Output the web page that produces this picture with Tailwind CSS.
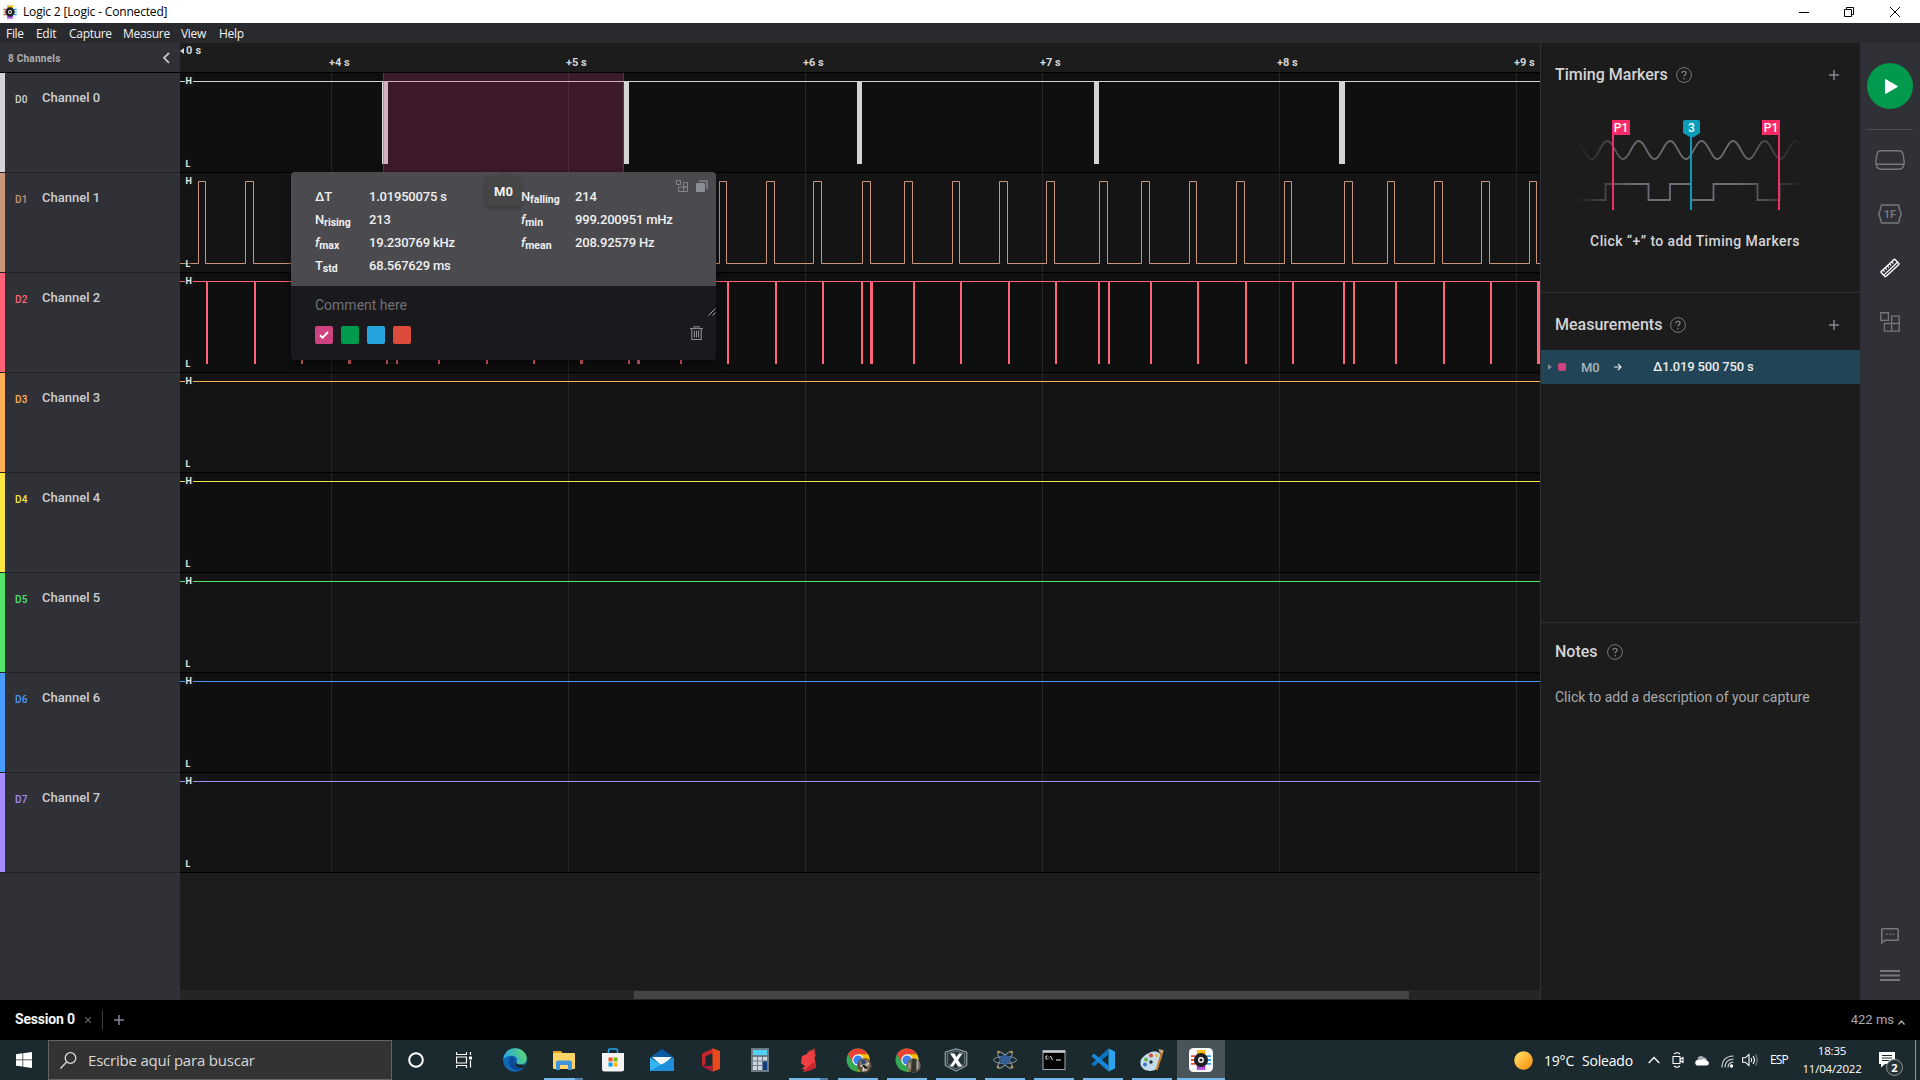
<!DOCTYPE html>
<html lang="en">
<head>
<meta charset="utf-8">
<title>Logic 2 [Logic - Connected]</title>
<script src="https://cdn.jsdelivr.net/npm/@tailwindcss/browser@4"></script>
</head>
<body class="w-[1920px] h-[1080px] overflow-hidden flex flex-col bg-black font-['Roboto',sans-serif] text-[#d4d4d6]">

<svg class="hidden">
  <defs>
    <symbol id="help" viewBox="0 0 16 16"><circle cx="8" cy="8" r="7.4" fill="none" stroke="#77787c" stroke-width="1"/><path d="M5.9 6.3c0-2.7 4.2-2.7 4.2-.2 0 1.7-2.1 1.5-2.1 3.4" fill="none" stroke="#85868a" stroke-width="1.2"/><circle cx="8" cy="11.7" r=".8" fill="#85868a"/></symbol>
    <symbol id="plus" viewBox="0 0 10 10"><path d="M5 0v10M0 5h10" stroke="#85868f" stroke-width="1.5"/></symbol>
    <symbol id="blocks" viewBox="0 0 20 20"><path d="M.75.75h7.7v7.7H.75zM11.6 4.2h7.6v7.3h-7.6zM4.4 11.5h7.2v7.7H4.4zM11.6 11.5h7.6v7.7h-7.6z" fill="none" stroke="currentColor" stroke-width="1.3"/></symbol>
    <symbol id="chrome" viewBox="0 0 24 24"><circle cx="12" cy="12" r="11.5" fill="#34a853"/><path d="M2 6.3A11.5 11.5 0 0 1 22 6.3H12L7 14.5z" fill="#ea4335"/><path d="M22 6.3A11.5 11.5 0 0 1 11.5 23.5L17 15 12 6.3z" fill="#fbbc04"/><circle cx="12" cy="12" r="5.7" fill="#fff"/><circle cx="12" cy="12" r="4.6" fill="#3b82ec"/></symbol>
    <symbol id="logic" viewBox="0 0 24 24"><rect width="24" height="24" rx="4.5" fill="#fafafa"/><path d="M8.8 2v3h2.200V2m2.200 0v3h2.200V2" stroke="#f5b400" stroke-width="1.800" fill="none"/><path d="M2 8.200h4M2 12h3M2 15.800h4" stroke="#ef4b3f" stroke-width="1.800"/><path d="M18 8.200h4M19 12h3M18 15.800h4" stroke="#29a5e8" stroke-width="1.800"/><path d="M8.800 22v-3h2.200v3m2.200 0v-3h2.200v3" stroke="#a13bd8" stroke-width="1.800" fill="none"/><circle cx="12" cy="12" r="5" fill="#fff" stroke="#202124" stroke-width="4.200"/><circle cx="12" cy="12" r="1.600" fill="#202124"/></symbol>
  </defs>
</svg>

<!-- window title -->
<header class="h-[23px] shrink-0 bg-white text-black flex items-center pl-[2px] font-['Open_Sans',sans-serif]">
  <svg class="size-[16px]"><use href="#logic"/></svg>
  <span class="ml-[5px] text-[12px] tracking-[-0.17px] leading-[23px]">Logic 2 [Logic - Connected]</span>
  <div class="ml-auto flex items-center">
    <svg class="w-[10px] h-[10px] mr-[35px]" viewBox="0 0 10 10"><path d="M0 5.5h10" stroke="#000"/></svg>
    <svg class="w-[10px] h-[10px] mr-[36px]" viewBox="0 0 10 10"><path d="M.5 2.5h7v7h-7zM2.5 2.5v-2h7v7h-2" fill="none" stroke="#000"/></svg>
    <svg class="w-[10px] h-[10px] mr-[20px]" viewBox="0 0 10 10"><path d="M0 0l10 10M10 0L0 10" stroke="#000"/></svg>
  </div>
</header>

<nav class="h-[20px] shrink-0 bg-[#292a2d] text-[#f2f2f2] text-[12px] leading-[21px] font-['Open_Sans',sans-serif] tracking-[-0.3px] flex pl-[6px] gap-[12px]">
  <span class="w-[18px] whitespace-nowrap">File</span><span class="w-[21px]">Edit</span><span class="w-[42px]">Capture</span><span class="w-[46px]">Measure</span><span class="w-[26px]">View</span><span>Help</span>
</nav>

<main class="h-[957px] shrink-0 flex">
  <!-- channel list -->
  <aside class="w-[180px] bg-[#303136] flex flex-col">
    <div class="h-[30px] border-b border-black flex items-center justify-between pl-[8px] pr-[10px]">
      <span class="pt-px text-[10px] font-bold text-[#aeafb3] tracking-[0.25px]">8 Channels</span>
      <svg class="w-[8px] h-[12px]" viewBox="0 0 8 12"><path d="M7 1L2 5.8 7 10.8" fill="none" stroke="#c4c5c8" stroke-width="1.8"/></svg>
    </div>
    <div id="channels"></div>
  </aside>

  <!-- waveform area -->
  <section class="relative w-[1360px] bg-[#1c1c1c] flex flex-col">
    <div class="relative h-[30px] border-b border-black text-[11px] font-bold text-[#d6d6d6]">
      <div class="absolute left-0 top-[1px] flex items-center leading-[14px] tracking-[0.2px]"><svg class="w-[4px] h-[6px] mr-[2px]" viewBox="0 0 4 6"><path d="M4 0v6L0 3z" fill="#d6d6d6"/></svg>0 s</div>
      <div id="ticks"></div>
    </div>
    <div id="waves"></div>
    <div class="absolute left-[203px] top-[30px] w-[241px] h-[99px] bg-[#d03d7d]/24 border-x border-[#d03d7d]/40"></div>
    <div class="mt-auto h-[10px] bg-[#252525] flex items-center"><div class="ml-[454px] w-[775px] h-[8px] bg-[#444444]"></div></div>

    <!-- measurement popup -->
    <div class="absolute left-[111px] top-[129px] w-[425px] h-[188px] rounded-[4px] bg-[#1a191e] shadow-[0_4px_10px_rgba(0,0,0,0.5)]">
      <div class="h-[114px] rounded-t-[4px] bg-[#4a4a4f] pl-[24px] pt-[13px] grid grid-cols-[54px_152px_54px_1fr] auto-rows-[23px] items-start content-start text-[13px] leading-[23px] tracking-[-0.2px] font-medium text-[#f0f0f1] [&_sub]:text-[10.5px] [&_sub]:bottom-[-0.2em] [&_sub]:font-bold [&_sub]:tracking-normal">
        <span>ΔT</span><span>1.01950075 s</span><span>N<sub>falling</sub></span><span>214</span>
        <span>N<sub>rising</sub></span><span>213</span><span><i>f</i><sub>min</sub></span><span>999.200951 mHz</span>
        <span><i>f</i><sub>max</sub></span><span>19.230769 kHz</span><span><i>f</i><sub>mean</sub></span><span>208.92579 Hz</span>
        <span>T<sub>std</sub></span><span>68.567629 ms</span>
      </div>
      <div class="pl-[24px] pt-[10px]">
        <div class="text-[14px] leading-[18px] text-[#707073]">Comment here</div>
        <div class="mt-[12px] flex items-center gap-[8px]">
          <div class="size-[18px] rounded-[2px] bg-[#d0417f] flex items-center justify-center"><svg class="size-[10px]" viewBox="0 0 10 10"><path d="M1 5.2l2.6 2.5L9 2" fill="none" stroke="#fff" stroke-width="1.9"/></svg></div>
          <div class="size-[18px] rounded-[2px] bg-[#009a4c]"></div>
          <div class="size-[18px] rounded-[2px] bg-[#25a3dc]"></div>
          <div class="size-[18px] rounded-[2px] bg-[#dc4c3a]"></div>
          <svg class="ml-auto mr-[13px] -mt-[4px] w-[13px] h-[14px]" viewBox="0 0 13 14"><path d="M0 2.5h13M4 2.2V.7h5v1.5M1.8 2.5v11h9.4v-11M4.4 4.5v7M6.5 4.5v7M8.6 4.5v7" fill="none" stroke="#8b8b93" stroke-width="1.1"/></svg>
        </div>
      </div>
      <svg class="absolute right-0 top-[136px] size-[8px]" viewBox="0 0 8 8"><path d="M.5 7.5l7-7M4.5 7.5l3-3" stroke="#c0c0c0" stroke-width=".9"/></svg>
      <div class="absolute right-[8px] top-[8px] flex gap-[8px] text-[#85858c]">
        <svg class="size-[12px]" viewBox="0 0 12 12"><path d="M.5.5h4v4h-4zM7.500 2.500h4v4.500h-4zM2.500 7h5v4.500h-5zM7.500 7h4v4.500h-4z" fill="none" stroke="currentColor"/></svg>
        <svg class="size-[12px]" viewBox="0 0 12 12"><rect y="3" width="9" height="9" rx="1" fill="#8d8d98"/><path d="M3 1h8v8" fill="none" stroke="#85858e" stroke-width="1.6"/></svg>
      </div>
      <div class="absolute left-[195px] top-[5px] w-[35px] h-[29px] rounded-[3px] bg-[#464646] shadow-[0_2px_4px_rgba(0,0,0,0.25)] text-center text-[13px] leading-[30px] font-bold text-[#f2f2f2]">M0</div>
      <svg class="absolute left-[206px] top-0 w-[12px] h-[5px]" viewBox="0 0 12 5"><path d="M6 0l6 5H0z" fill="#464646"/></svg>
    </div>
  </section>

  <!-- side panel -->
  <aside class="w-[320px] bg-[#1c1c1c] border-l border-[#303136] flex flex-col">
    <section class="h-[250px] border-b border-[#303136]">
      <div class="pt-[20px] pl-[14px] pr-[21px] flex items-center">
        <h2 class="text-[16px] leading-[23px] font-medium">Timing Markers</h2>
        <svg class="size-[16px] ml-[8px]"><use href="#help"/></svg>
        <svg class="size-[10px] ml-auto"><use href="#plus"/></svg>
      </div>
      <svg class="ml-[19px] mt-[29px] w-[250px] h-[100px] font-['Roboto',sans-serif]" viewBox="1560 115 250 100">
        <defs><linearGradient id="fade" gradientUnits="userSpaceOnUse" x1="1576" x2="1804" y1="0" y2="0"><stop offset="0" stop-color="#6d6c75" stop-opacity="0"/><stop offset=".25" stop-color="#6d6c75"/><stop offset=".72" stop-color="#6d6c75"/><stop offset="1" stop-color="#6d6c75" stop-opacity="0"/></linearGradient></defs>
        <path id="sine" fill="none" stroke="url(#fade)" stroke-width="1.8"/>
        <path d="M1574 200H1605.5V184H1648.5V200H1670V184H1691V200H1713.5V184H1757.5V200H1780V184H1803" fill="none" stroke="url(#fade)" stroke-width="1.8"/>
        <path d="M1612 120h18v15h-16v75h-2zM1762 120h18v90h-2v-75h-16z" fill="#f92b66"/>
        <path d="M1685 120h13a2 2 0 0 1 2 2v11l-6 4h-2v73h-2v-73l-7-4v-11a2 2 0 0 1 2-2z" fill="#0b9cb8"/>
        <g fill="#fff" font-size="12" font-weight="500" text-anchor="middle"><text x="1621" y="132">P1</text><text x="1771" y="132">P1</text><text x="1691.5" y="132">3</text></g>
      </svg>
      <p class="mt-[16px] text-[14px] tracking-[0.4px] leading-[20px] font-medium text-center pr-[11px]">Click “+” to add Timing Markers</p>
    </section>
    <section class="h-[330px] border-b border-[#303136]">
      <div class="pt-[20px] pl-[14px] pr-[21px] flex items-center">
        <h2 class="text-[16px] leading-[23px] font-medium">Measurements</h2>
        <svg class="size-[16px] ml-[8px]"><use href="#help"/></svg>
        <svg class="size-[10px] ml-auto"><use href="#plus"/></svg>
      </div>
      <div class="mt-[14px] h-[34px] bg-[#214457] flex items-center pl-[7px]">
        <svg class="w-[4px] h-[6px]" viewBox="0 0 4 6"><path d="M0 0l4 3-4 3z" fill="#7d8c95"/></svg>
        <div class="ml-[6px] size-[8px] rounded-[2px] bg-[#d0417f]"></div>
        <span class="ml-[15px] mt-px w-[33px] text-[13px] font-medium text-[#a9b4bc]">M0</span>
        <svg class="w-[8px] h-[8px]" viewBox="0 0 8 8"><path d="M0 4h7M4 1l3 3-3 3" fill="none" stroke="#e8e8e8" stroke-width="1.2"/></svg>
        <span class="ml-[31px] text-[13px] tracking-[-0.17px] font-medium text-[#ececee]">Δ1.019 500 750 s</span>
      </div>
    </section>
    <section>
      <div class="pt-[17px] pl-[14px] flex items-center">
        <h2 class="text-[16px] leading-[23px] font-medium">Notes</h2>
        <svg class="size-[16px] ml-[9px]"><use href="#help"/></svg>
      </div>
      <p class="mt-[24px] pl-[14px] text-[14px] leading-[20px] text-[#a9aaad]">Click to add a description of your capture</p>
    </section>
  </aside>

  <!-- tool strip -->
  <aside class="w-[60px] bg-[#303136] flex flex-col items-center pt-[20px] text-[#77787d]">
    <div class="size-[46px] rounded-full bg-[#00994d] flex items-center justify-center"><svg class="ml-[3px] w-[13px] h-[15px]" viewBox="0 0 13 15"><path d="M.5.5v14L12.5 7.5z" fill="#fff" stroke="#fff" stroke-linejoin="round"/></svg></div>
    <div class="mt-[20px] w-[46px] h-px bg-[#4e4f54]"></div>
    <svg class="mt-[20px] w-[30px] h-[20px]" viewBox="0 0 30 20"><path d="M6 .8h18q3.500 0 4.200 4.200l1 7q0 7-5.200 7.200H6Q.8 19 .8 12l1-7Q2.500.8 6 .8zM1 14.200h28" fill="none" stroke="currentColor" stroke-width="1.4"/></svg>
    <svg class="mt-[34px] w-[24px] h-[20px] font-['Roboto',sans-serif]" viewBox="0 0 24 20"><path d="M4.200 1h15.600q.8 0 1 .8Q21.500 6 23.200 10 21.500 14 20.800 18.200q-.2.8-1 .8H4.200q-.8 0-1-.8Q2.500 14 .8 10 2.500 6 3.200 1.800q.2-.8 1-.8z" fill="none" stroke="currentColor" stroke-width="1.5"/><text x="12" y="14" text-anchor="middle" font-size="11" font-weight="700" fill="currentColor">1F</text></svg>
    <svg class="mt-[34px] w-[22px] h-[20px]" viewBox="0 0 22 20"><g transform="rotate(-43 11 10)" fill="none" stroke="#fff"><rect x="1.500" y="6.500" width="19" height="7" rx="1" stroke-width="1.400"/><path d="M2 11h18" stroke-width="1.300"/><path d="M4.500 6.500v2.500M7.500 6.500v2.500M10.500 6.500v2.500M13.500 6.500v2.500M16.500 6.500v2.500" stroke-width="1.200"/></g></svg>
    <svg class="mt-[34px] size-[20px]"><use href="#blocks"/></svg>
    <svg class="mt-auto w-[18px] h-[16px]" viewBox="0 0 18 16"><path d="M.8 15V1.600q0-.8.8-.8h14.800q.8 0 .8.8v9.800q0 .8-.8.8H4z" fill="none" stroke="currentColor" stroke-width="1.500"/><path d="M5 6.300h1.500M8.300 6.300h1.500M11.600 6.300h1.500" stroke="currentColor" stroke-width="1.500"/></svg>
    <svg class="mt-[25px] mb-[18px] w-[20px] h-[13px]" viewBox="0 0 20 13"><path d="M0 2h20M0 6.500h20M0 11h20" stroke="currentColor" stroke-width="2"/></svg>
  </aside>
</main>

<!-- session tabs -->
<footer class="h-[40px] shrink-0 bg-black flex items-center pl-[15px] pr-[15px]">
  <span class="pb-px text-[14px] font-bold tracking-[-0.2px] text-[#f4f4f4] w-[62px] whitespace-nowrap">Session 0</span>
  <svg class="ml-[8px] size-[6px]" viewBox="0 0 6 6"><path d="M0 0l6 6M6 0L0 6" stroke="#6c6c70" stroke-width="1.100"/></svg>
  <div class="ml-[11px] w-px h-[20px] bg-[#3a3a3e]"></div>
  <svg class="ml-[11px] size-[10px]"><use href="#plus"/></svg>
  <span class="ml-auto text-[13px] text-[#a9aaad]">422 ms</span>
  <svg class="ml-[4px] mt-[5px] w-[7px] h-[5px]" viewBox="0 0 7 5"><path d="M.5 4.500l3-3.500 3 3.500" fill="none" stroke="#b0b0b4" stroke-width="1.300"/></svg>
</footer>

<!-- taskbar -->
<footer class="h-[40px] shrink-0 bg-[#1b2a2f] flex text-white font-['Open_Sans',sans-serif]">
  <div class="w-[48px] flex items-center justify-center"><svg class="size-[16px]" viewBox="0 0 16 16"><path d="M0 2.200l6.500-.9v6.200H0zM7.200 1.200L16 0v7.500H7.200zM0 8.300h6.500v6.200L0 13.700zM7.200 8.300H16V16l-8.800-1.200z" fill="#fff"/></svg></div>
  <div class="w-[344px] border border-[#656565] bg-[#333333] flex items-center pl-[11px]">
    <svg class="w-[17px] h-[17px]" viewBox="0 0 17 17"><circle cx="10.500" cy="6" r="5.300" fill="none" stroke="#dedede" stroke-width="1.300"/><path d="M6.800 9.800L.5 16.500" stroke="#dedede" stroke-width="1.300"/></svg>
    <span class="ml-[11px] text-[15px] tracking-[-0.200px] text-[#d8d8d8] leading-[38px]">Escribe aquí para buscar</span>
  </div>
  <div class="w-[48px] flex items-center justify-center"><svg class="size-[16px]" viewBox="0 0 16 16"><circle cx="8" cy="8" r="6.800" fill="none" stroke="#fff" stroke-width="2"/></svg></div>
  <div class="w-[50px] pr-[2px] flex items-center justify-center"><svg class="w-[16px] h-[16px]" viewBox="0 0 16 16"><path d="M.5 0v2.500h10V0M.5 5h10v6H.5zM.5 16v-2.500h10V16M14.500 0v3M14.500 8.500v7" fill="none" stroke="#fff" stroke-width="1.200"/><rect x="13" y="4.500" width="3" height="3" fill="#fff"/></svg></div>

  <div class="flex [&>div]:w-[49px] [&>div]:h-[40px] [&>div]:flex [&>div]:flex-col [&>div]:items-center [&>div]:justify-between [&>div]:pt-[8px] [&_svg]:size-[24px] [&_b]:w-[40px] [&_b]:h-[2px] [&_b]:bg-[#76b9ed]">
    <div><svg viewBox="0 0 24 24"><defs><linearGradient id="eg" x1="0" x2="1" y1=".3" y2="0"><stop offset="0" stop-color="#2ba8e0"/><stop offset="1" stop-color="#5fdc68"/></linearGradient></defs><circle cx="12" cy="12" r="11.800" fill="#1269b8"/><path d="M.3 12C1 4 6 .2 12 .2c7 0 11.800 5 11.800 10 0 4-3 6.300-6.500 6.300-3 0-4.500-1.500-3.500-3 1.800-3-1-5.800-5-5.800C5 7.700 1.500 9.500.3 12z" fill="url(#eg)"/><path d="M9 8c-5 3-4 11 1.500 13.500 4 1.800 8.500 0 11-3.500-3 1.500-8 1.300-9.500-1.500-1-2-1-3.500.3-5z" fill="#0c4a97"/><path d="M13.500 13.500c-1 1.500.500 3 3.500 3l6 .2-2.500 3c-4 1-9.500-1-8-6z" fill="#1b2a2f"/></svg></div>
    <div><svg viewBox="0 0 24 24"><path d="M1 3h8l2 2.500H1z" fill="#e5a428"/><rect x="1" y="5" width="22" height="16" rx="1" fill="#ffd665"/><path d="M4 22v-7.500q0-2 2-2h12q2 0 2 2V22h-4v-5H8v5z" fill="#3f96dc"/></svg><b class="!w-[31px] -ml-[9px] shadow-[8px_0_0_#4f7ea6]"></b></div>
    <div><svg viewBox="0 0 24 24"><path d="M7.500 6V2.500q0-1.500 1.500-1.500h6q1.500 0 1.500 1.500V6" fill="none" stroke="#1fa8ec" stroke-width="1.600"/><path d="M1 5h22v16q0 2.500-2.500 2.500h-17Q1 23.500 1 21z" fill="#f4f4f4"/><path d="M7.500 9.500h4v4h-4z" fill="#f25022"/><path d="M12.500 9.500h4v4h-4z" fill="#7fba00"/><path d="M7.500 14.500h4v4h-4z" fill="#00a4ef"/><path d="M12.500 14.500h4v4h-4z" fill="#ffb900"/></svg></div>
    <div><svg viewBox="0 0 24 24"><path d="M0 9.500L12 1l12 8.500L12 17z" fill="#0c59a4"/><path d="M2 9h20l-10 9z" fill="#f1f6fa"/><path d="M0 9.500V23h24V9.500L12 17z" fill="#36b4f2"/><path d="M0 23L24 9.500V23z" fill="#1f8fdc"/></svg></div>
    <div><svg viewBox="0 0 24 24"><path d="M3 5.500L14 .5v5l-4 1-3.500 2v8L3 18.500z" fill="#c5262c"/><path d="M13.500.3L21 3v18l-7.500 2.700z" fill="#eb4a1b"/><path d="M3 18.500l10.500-1v6.200z" fill="#b01e3c"/></svg></div>
    <div><svg viewBox="0 0 24 24"><rect x="3" width="18" height="24" rx="1" fill="#6f7b86"/><rect x="5" y="2" width="14" height="5" fill="#4ed3f7"/><path d="M5 9h4v3.500H5zM10 9h4v3.500h-4zM15 9h4v3.500h-4zM5 13.500h4V17H5zM10 13.500h4V17h-4zM5 18h4v4H5zM10 18h4v4h-4z" fill="#cdd5dc"/><path d="M15 13.500h4V22h-4z" fill="#103f86"/></svg></div>
    <div><svg viewBox="0 0 24 24"><path d="M18 0l-1 4 1.500-1-1 3.500 1.500-.5-1.500 4 1 5 .5 4.500L14 22l-8 2 1.500-3H4l4-2.500-4-3.500 1-7 5-2 1-3 1 1.500 1-3 1 1.500z" fill="#ee3f42"/><path d="M17 14l2 5-5 3-8 2 5-5z" fill="#c4242a"/></svg><b class="!w-[31px] -ml-[9px] shadow-[8px_0_0_#4f7ea6]"></b></div>
    <div><svg class="overflow-visible" viewBox="0 0 24 24"><use href="#chrome"/><circle cx="18.500" cy="17.500" r="7.200" fill="#5b4a3b"/><path d="M13.500 14l4-3 5 2 1.500 4-3 6-5 1z" fill="#8d8377"/><circle cx="17.500" cy="14" r="2.300" fill="#304878"/><path d="M14 18l3 1 1 4M20 17l3-2M19 21l2 1" stroke="#f0e2d0" stroke-width="1.300"/><path d="M17 17.500l4 3" stroke="#18120f" stroke-width="2"/></svg><b></b></div>
    <div><svg class="overflow-visible" viewBox="0 0 24 24"><use href="#chrome"/><circle cx="18.500" cy="17.500" r="7.200" fill="#6c665b"/><path d="M17 11h4v13h-5z" fill="#343330"/><path d="M13 15h3v6h-3z" fill="#948d80"/><path d="M22.500 13v8" stroke="#b0a898" stroke-width="1.500"/></svg><b></b></div>
    <div><svg viewBox="0 0 24 24"><path d="M12 .8L22.800 4v13.500L12 23.200 1.200 17.500V4z" fill="#344249" stroke="#a5b2b8" stroke-width="1"/><path d="M12 3l8.500 2.500V16L12 21l-8.500-5V5.500z" fill="#27333a" stroke="#71838b" stroke-width=".8"/><path d="M6 5.500h4.500l2 3.500L15 5.500h3.500L14 12l4.500 6.500H14l-2.300-3.800L9 18.500H5.500l4.800-6.700z" fill="#fff"/></svg><b></b></div>
    <div><svg viewBox="0 0 24 24"><g fill="none" stroke="#8794a0" stroke-width="1"><ellipse cx="12" cy="12" rx="11.500" ry="3.600"/><ellipse cx="12" cy="12" rx="10.500" ry="3.400" transform="rotate(50 12 12)"/><ellipse cx="12" cy="12" rx="10.500" ry="3.400" transform="rotate(-50 12 12)"/></g><path d="M7 8.500l5-1.500 5 1.500 1 3-3.500 4L12 17l-2.500-1.500L6 11.500z" fill="#345c99"/><g fill="#c79c4a"><circle cx="5.500" cy="4" r="1.300"/><circle cx="18.500" cy="4" r="1.300"/><circle cx="5" cy="19" r="1.300"/><circle cx="19" cy="19" r="1.300"/></g></svg><b></b></div>
    <div><svg viewBox="0 0 24 24"><rect x="1" y="2.500" width="22" height="19" fill="#030303" stroke="#a5a9ab"/><path d="M1 3.800h22" stroke="#c9cccd" stroke-width="2"/><path d="M5.500 8H4v3h1.500M7 8.500v.8M7 10.500v.8M8.500 8l2 4M14 12h5" fill="none" stroke="#e8e8e8"/></svg><b></b></div>
    <div><svg viewBox="0 0 24 24"><path d="M17.500.5L24 3.500v17l-6.500 3z" fill="#2ba3f0"/><path d="M17.500.5v6L3 18.500.3 16z" fill="#0c72bd"/><path d="M.3 8L3 5.500l14.500 12v6z" fill="#1687d6"/></svg><b></b></div>
    <div><svg viewBox="0 0 24 24"><path d="M9 5C16 1.500 21 5 21.500 9c.5 3-3 3-3 5s2 4-2 7c-5 3.500-13 2-15.500-3C-1 13 2 8 9 5z" fill="#c4dcea"/><circle cx="6" cy="11.500" r="2" fill="#6fb146"/><circle cx="11" cy="7.500" r="2" fill="#d14a3c"/><circle cx="16.500" cy="7.500" r="1.800" fill="#f0ba38"/><circle cx="5" cy="16.500" r="2" fill="#397dc4"/><circle cx="11" cy="14" r="1.700" fill="#1b2a2f"/><path d="M21 4L15.500 22l2 .5L23 5z" fill="#c77b2c"/><path d="M18.500 1l5.200 1.200-1 3.300-3-.7z" fill="#c6a57d"/></svg><b></b></div>
    <div class="!w-[48px] ml-px bg-[#485459]"><svg><use href="#logic"/></svg><b class="!w-[48px]"></b></div>
  </div>

  <div class="ml-auto flex items-center pr-[4px] text-[13.500px]">
    <svg class="size-[19px]" viewBox="0 0 19 19"><defs><linearGradient id="sun" x1="0" y1="0" x2="1" y2="1"><stop offset=".1" stop-color="#ffe066"/><stop offset=".9" stop-color="#fb9010"/></linearGradient></defs><circle cx="9.500" cy="9.500" r="9.300" fill="url(#sun)"/></svg>
    <span class="ml-[11px] w-[38px] text-[14px] tracking-[-0.200px]">19°C</span>
    <span class="w-[66px] text-[14px] tracking-[-0.200px]">Soleado</span>
    <svg class="w-[12px] h-[8px]" viewBox="0 0 12 8"><path d="M.7 7L6 1.500 11.300 7" fill="none" stroke="#fff" stroke-width="1.300"/></svg>
    <svg class="ml-[12px] w-[12px] h-[16px]" viewBox="0 0 12 16"><path d="M1 4.500h7v7H1zM8 7.500l3-2v5l-3-2M2 2q3-2.500 6 0M2 14q3 2.500 6 0" fill="none" stroke="#fff" stroke-width="1.100"/></svg>
    <svg class="ml-[10px] w-[16px] h-[12px]" viewBox="0 0 16 12"><path d="M3.500 6C3 2 8 .5 10 3.500c2 0 3 1.500 3 3z" fill="#a9afb1"/><path d="M3 11.500a3 3 0 0 1 0-5.500h3l4-1 3 1.800a2.400 2.400 0 0 1 0 4.700z" fill="#fff"/></svg>
    <svg class="ml-[11px] mt-[3px] w-[13px] h-[13px]" viewBox="0 0 13 13"><circle cx="10.500" cy="11" r="1.700" fill="#fff"/><path d="M7 12.500q0-5 5.500-5.500M4 12.500q0-8 8.500-8.500M1 12.500Q1 1.500 12.500 1" fill="none" stroke="#d5d9da" stroke-width="1.100"/></svg>
    <svg class="ml-[8px] w-[17px] h-[14px]" viewBox="0 0 17 14"><path d="M.6 4.800h2.600L7 1.500v11L3.200 9.200H.6z" fill="none" stroke="#fff" stroke-width="1.100"/><path d="M9 5q1.500 2 0 4M11 3.200q3 3.800 0 7.600" fill="none" stroke="#fff" stroke-width="1.100"/><path d="M13.300 1.500q4 5.500 0 11" fill="none" stroke="#7b8588" stroke-width="1.100"/></svg>
    <span class="ml-[11px] w-[32px] text-[12px] tracking-[-0.900px]">ESP</span>
    <div class="w-[60px] text-center text-[11.500px] leading-[18px] tracking-[-0.200px]"><div>18:35</div><div>11/04/2022</div></div>
    <div class="relative ml-[17px] w-[36px] h-[16px] text-[10px]">
      <svg class="w-[16px] h-[16px]" viewBox="0 0 16 16"><path d="M0 0h16v12H6l-4 3.500V12H0z" fill="#fff"/><path d="M3 3.500h10M3 6h10M3 8.500h7" stroke="#1b2a2f"/></svg>
      <div class="absolute left-[7px] top-[7px] size-[17px] rounded-full bg-[#2a3539] border border-[#8e9496] text-center leading-[15px] font-bold text-[11px]">2</div>
    </div>
    <div class="w-px h-[40px] bg-[#8c9598]"></div>
  </div>
</footer>

<script>
const colors = ['#d4d4d4', '#c8967a', '#ff6478', '#ffb055', '#fae642', '#55e36a', '#4b9bff', '#a58cff'];
const gridX = [331, 568, 805, 1042, 1279, 1516];

const ch0 = [[382, 6], [624, 5], [857, 5], [1094, 5], [1339, 6]];
const ch1 = [[198, 205], [245, 253], [719, 726], [766, 774], [813, 821], [862, 870], [904, 912], [952, 959], [999, 1007],
  [1046, 1054], [1099, 1107], [1141, 1149], [1189, 1196], [1236, 1244], [1284, 1291], [1344, 1352], [1387, 1394],
  [1434, 1442], [1481, 1489], [1529, 1536]];
const ch2 = [[206], [254], [301], [348, 3], [386], [396], [438], [486], [533], [580, 3], [628], [637, 3], [680], [727],
  [775], [822], [861], [870, 3], [913], [960], [1008], [1055], [1098], [1108], [1150], [1197], [1245], [1292], [1343],
  [1353], [1395], [1443], [1490], [1537, 3]];

function trace(i) {
  const c = colors[i];
  if (i === 1) {
    let d = 'M180 90.5';
    for (const [a, b] of ch1) d += `H${a + .5}V8.5H${b + .5}V90.5`;
    return `<path d="${d}H1540" fill="none" stroke="${c}"/>`;
  }
  let s = `<path d="M180 8.5H1540" stroke="${c}"/>`;
  const pulses = i === 0 ? ch0 : i === 2 ? ch2 : [];
  for (const [x, w = 2] of pulses) s += `<rect x="${x}" y="8" width="${w}" height="83" fill="${c}"/>`;
  return s;
}

let rows = '', waves = '';
colors.forEach((c, i) => {
  rows += `<div class="h-[100px] flex border-b border-[#232427]">
    <div class="w-[5px]" style="background:${c}"></div>
    <span class="pl-[10px] pt-[19px] w-[37px] text-[10px] leading-[16px] font-medium tracking-[0.2px]" style="color:${c}">D${i}</span>
    <span class="pt-[16px] text-[13px] leading-[18px] font-medium text-[#cdced1]">Channel ${i}</span></div>`;
  const grid = gridX.map(x => `M${x + .5} 0V100`).join('');
  waves += `<div class="relative h-[100px] border-b border-black ${i % 2 ? 'bg-[#141414]' : 'bg-[#0f0f0f]'}">
    <svg class="block w-[1360px] h-[99px]" viewBox="180 0 1360 99"><path d="${grid}" stroke="#262626"/>${trace(i)}</svg>
    <div class="absolute left-[5px] top-[3px] bottom-[2px] flex flex-col justify-between items-start text-[9px] leading-[11px] font-bold text-[#e6e6e6]">
      <span class="w-[8px] pl-[0.5px] h-[11px] bg-[#171717]">H</span><span class="px-[0.5px] bg-[#171717]/40">L</span></div></div>`;
});
document.getElementById('channels').innerHTML = rows;
document.getElementById('waves').innerHTML = waves;

document.getElementById('ticks').innerHTML = gridX.map((x, i) =>
  `<div class="absolute top-[13px] leading-[14px] whitespace-nowrap" style="left:${x - 182}px">+${i + 4} s</div>
   <div class="absolute top-[26px] w-px h-[3px] bg-[#262626]" style="left:${x - 180}px"></div>`).join('');

let d = '';
for (let x = 1578; x <= 1805; x++) d += (d ? 'L' : 'M') + x + ' ' + (150 - 9 * Math.cos((x - 1607.3) / 31.45 * 2 * Math.PI)).toFixed(2);
document.getElementById('sine').setAttribute('d', d);
</script>
</body>
</html>
